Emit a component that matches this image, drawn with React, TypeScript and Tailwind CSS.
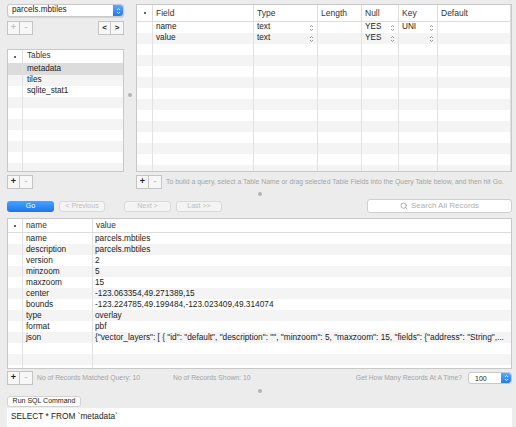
import React from 'react';
import { Search } from 'lucide-react';

const fieldRows = [
  { field: 'name', type: 'text', nul: 'YES', key: 'UNI' },
  { field: 'value', type: 'text', nul: 'YES', key: '' },
];

const records = [
  ['name', 'parcels.mbtiles'],
  ['description', 'parcels.mbtiles'],
  ['version', '2'],
  ['minzoom', '5'],
  ['maxzoom', '15'],
  ['center', '-123.063354,49.271389,15'],
  ['bounds', '-123.224785,49.199484,-123.023409,49.314074'],
  ['type', 'overlay'],
  ['format', 'pbf'],
  ['json', '{"vector_layers": [ { "id": "default", "description": "", "minzoom": 5, "maxzoom": 15, "fields": {"address": "String",...'],
];

const tables = ['metadata', 'tiles', 'sqlite_stat1'];

function Updown({ className = '' }: { className?: string }) {
  return (
    <svg width="5" height="8" viewBox="0 0 5 8" className={className}>
      <path d="M1 3 L2.5 1.5 L4 3 M1 5 L2.5 6.5 L4 5" fill="none" stroke="currentColor" strokeWidth="0.8" />
    </svg>
  );
}

function Stepper() {
  return (
    <div className="flex h-full w-[10px] items-center justify-center rounded-r-[3px] bg-gradient-to-b from-[#5aa9fb] to-[#1b7bf3] text-white">
      <Updown />
    </div>
  );
}

function Dot() {
  return <div className="h-[4px] w-[4px] rounded-full bg-[#b4b4b4]" />;
}

function PlusMinus({ plusOn }: { plusOn: boolean }) {
  return (
    <div className="flex h-[14px]">
      <div
        className={`flex w-[13px] items-center justify-center border border-[#c4c4c4] bg-[#f7f7f7] text-[9px] font-bold ${
          plusOn ? 'text-[#222]' : 'text-[#c4c4c4]'
        }`}
      >
        +
      </div>
      <div className="flex w-[13px] items-center justify-center border border-l-0 border-[#c4c4c4] bg-[#f7f7f7] text-[9px] font-bold text-[#c4c4c4]">
        -
      </div>
    </div>
  );
}

function HeaderDot() {
  return <div className="mx-auto h-[2px] w-[2px] rounded-full bg-[#333]" />;
}

export default function App() {
  return (
    <div
      className="flex h-[427px] w-[516px] flex-col overflow-hidden bg-[#ececec] pl-[7px] pr-[4px] text-[#222]"
      style={{ fontFamily: '"Liberation Sans", Arial, sans-serif' }}
    >
      {/* top area */}
      <div className="mt-[4px] flex h-[185px]">
        {/* left column */}
        <div className="flex w-[117px] flex-col">
          <div className="flex h-[13px] items-center rounded-[3px] border border-[#c9c9c9] bg-white shadow-[0_0.5px_1px_rgba(0,0,0,0.1)]">
            <span className="flex-1 pl-[4px] text-[8.2px] leading-none">parcels.mbtiles</span>
            <Stepper />
          </div>
          <div className="mt-[4px] flex justify-between">
            <PlusMinus plusOn={false} />
            <div className="flex h-[14px]">
              <div className="flex w-[13px] items-center justify-center border border-[#c4c4c4] bg-[#f7f7f7] text-[8px] font-bold">&lt;</div>
              <div className="flex w-[13px] items-center justify-center border border-l-0 border-[#c4c4c4] bg-[#f7f7f7] text-[8px] font-bold">&gt;</div>
            </div>
          </div>
          <div className="mt-[14px] h-[123px] overflow-hidden border border-[#c8c8c8] bg-white text-[8.2px]">
            <div className="grid h-[14px] grid-cols-[15px_1fr] border-b border-[#dcdcdc]">
              <div className="flex items-center border-r border-[#dcdcdc]"><HeaderDot /></div>
              <div className="flex items-center pl-[4px] text-[#333]">Tables</div>
            </div>
            {Array.from({ length: 10 }).map((_, i) => (
              <div
                key={i}
                className={`grid h-[11px] grid-cols-[15px_1fr] ${
                  i === 0 ? 'bg-[#dcdcdc]' : i % 2 === 1 ? 'bg-[#f4f4f4]' : 'bg-white'
                }`}
              >
                <div className="border-r border-[#e2e2e2]" />
                <div className="flex items-center pl-[4px] leading-none">{tables[i] ?? ''}</div>
              </div>
            ))}
          </div>
          <div className="mt-[3px]">
            <PlusMinus plusOn />
          </div>
        </div>

        {/* vertical splitter */}
        <div className="flex w-[12px] items-center justify-center pb-[4px]">
          <Dot />
        </div>

        {/* right column */}
        <div className="flex flex-1 flex-col">
          <div className="h-[168px] overflow-hidden border border-[#c8c8c8] bg-white text-[8.2px]">
            <div className="grid h-[17px] grid-cols-[16px_101px_64px_44px_37px_39px_1fr] border-b border-[#dcdcdc] text-[8.5px] text-[#333]">
              <div className="flex items-center border-r border-[#dcdcdc]"><HeaderDot /></div>
              {['Field', 'Type', 'Length', 'Null', 'Key', 'Default'].map((h) => (
                <div key={h} className="flex items-center border-r border-[#dcdcdc] pl-[3px]">
                  {h}
                </div>
              ))}
            </div>
            {Array.from({ length: 14 }).map((_, i) => {
              const r = fieldRows[i];
              return (
                <div
                  key={i}
                  className={`grid h-[11px] grid-cols-[16px_101px_64px_44px_37px_39px_1fr] leading-none ${
                    i % 2 === 1 ? 'bg-[#f4f4f4]' : 'bg-white'
                  }`}
                >
                  <div className="border-r border-[#e2e2e2]" />
                  <div className="flex items-center border-r border-[#e2e2e2] pl-[3px]">{r?.field}</div>
                  <div className="flex items-center justify-between border-r border-[#e2e2e2] pl-[3px] pr-[3px]">
                    {r && <span>{r.type}</span>}
                    {r && <Updown className="text-[#888]" />}
                  </div>
                  <div className="border-r border-[#e2e2e2]" />
                  <div className="flex items-center justify-between border-r border-[#e2e2e2] pl-[3px] pr-[3px]">
                    {r && <span>{r.nul}</span>}
                    {r && <Updown className="text-[#888]" />}
                  </div>
                  <div className="flex items-center justify-between border-r border-[#e2e2e2] pl-[3px] pr-[3px]">
                    {r && <span>{r.key}</span>}
                    {r && <Updown className="text-[#888]" />}
                  </div>
                  <div className="border-r border-[#e2e2e2]" />
                </div>
              );
            })}
          </div>
          <div className="mt-[3px] flex items-center">
            <PlusMinus plusOn />
            <span className="ml-[4px] whitespace-nowrap text-[6.85px] text-[#a4a4a4]">
              To build a query, select a Table Name or drag selected Table Fields into the Query Table below, and then hit Go.
            </span>
          </div>
        </div>
      </div>

      {/* horizontal splitter */}
      <div className="flex h-[10px] items-center justify-center">
        <Dot />
      </div>

      {/* query toolbar */}
      <div className="flex h-[14px] items-center">
        <div className="flex h-[11px] w-[47px] items-center justify-center rounded-[3px] bg-gradient-to-b from-[#4aa0fa] to-[#1477f2] text-[7px] text-white">
          Go
        </div>
        <div className="ml-[5px] flex h-[11px] w-[46px] items-center justify-center rounded-[3px] border border-[#dadada] bg-[#f4f4f4] text-[7px] text-[#bdbdbd]">
          &lt; Previous
        </div>
        <div className="ml-[19px] flex h-[11px] w-[47px] items-center justify-center rounded-[3px] border border-[#dadada] bg-[#f4f4f4] text-[7px] text-[#bdbdbd]">
          Next &gt;
        </div>
        <div className="ml-[5px] flex h-[11px] w-[46px] items-center justify-center rounded-[3px] border border-[#dadada] bg-[#f4f4f4] text-[7px] text-[#bdbdbd]">
          Last &gt;&gt;
        </div>
        <div className="ml-auto flex h-[14px] w-[145px] items-center justify-center gap-[3px] rounded-[3px] border border-[#cfcfcf] bg-white text-[8px] text-[#b0b0b0]">
          <Search size={8} strokeWidth={2} className="text-[#888]" />
          Search All Records
        </div>
      </div>

      {/* records table */}
      <div className="mt-[5px] h-[151px] overflow-hidden border border-[#c8c8c8] bg-white text-[8.3px]">
        <div className="grid h-[14px] grid-cols-[15px_70px_1fr] border-b border-[#dcdcdc] text-[#333]">
          <div className="flex items-center border-r border-[#dcdcdc]"><HeaderDot /></div>
          <div className="flex items-center border-r border-[#dcdcdc] pl-[3px]">name</div>
          <div className="flex items-center pl-[3px]">value</div>
        </div>
        {Array.from({ length: 13 }).map((_, i) => {
          const r = records[i];
          return (
            <div
              key={i}
              className={`grid h-[11px] grid-cols-[15px_70px_1fr] leading-none ${
                i % 2 === 1 ? 'bg-[#f4f4f4]' : 'bg-white'
              }`}
            >
              <div className="border-r border-[#e2e2e2]" />
              <div className="flex items-center border-r border-[#e2e2e2] pl-[3px]">{r?.[0]}</div>
              <div className="flex min-w-0 items-center pl-[2px]">
                <span className="whitespace-nowrap">{r?.[1]}</span>
              </div>
            </div>
          );
        })}
      </div>

      {/* records footer */}
      <div className="mt-[2px] flex h-[14px] items-center">
        <PlusMinus plusOn />
        <span className="ml-[4px] w-[136px] whitespace-nowrap text-[6.8px] text-[#a4a4a4]">No of Records Matched Query: 10</span>
        <span className="whitespace-nowrap text-[6.8px] text-[#a4a4a4]">No of Records Shown: 10</span>
        <span className="ml-auto mr-[6px] whitespace-nowrap text-[6.8px] text-[#a4a4a4]">Get How Many Records At A Time?</span>
        <div className="flex h-[12px] w-[44px] items-center rounded-[3px] border border-[#c9c9c9] bg-white">
          <span className="flex-1 pl-[6px] text-[7px] leading-none">100</span>
          <Stepper />
        </div>
      </div>

      {/* horizontal splitter */}
      <div className="flex h-[11px] items-center justify-center">
        <Dot />
      </div>

      {/* SQL */}
      <div className="flex h-[11px] w-[74px] items-center justify-center rounded-[3px] border border-[#d2d2d2] bg-white text-[7px] text-[#222]">
        Run SQL Command
      </div>
      <div className="mt-[1px] flex-1 bg-white pl-[4px] pt-[2px] text-[8.3px]">
        SELECT * FROM `metadata`
      </div>
    </div>
  );
}
